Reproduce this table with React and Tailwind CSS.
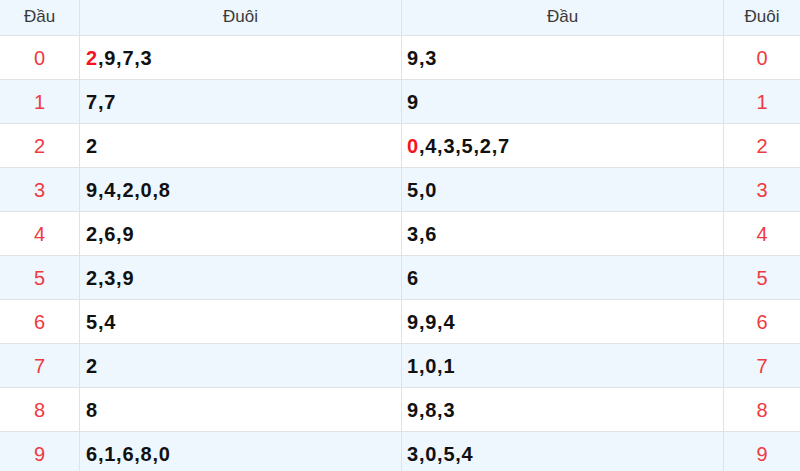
import React from "react";

const rows = [
    { dau: "0", duoi: ["2", "9", "7", "3"], hlDuoi: 0, dau2: ["9", "3"], hlDau: -1 },
    { dau: "1", duoi: ["7", "7"], hlDuoi: -1, dau2: ["9"], hlDau: -1 },
    { dau: "2", duoi: ["2"], hlDuoi: -1, dau2: ["0", "4", "3", "5", "2", "7"], hlDau: 0 },
    { dau: "3", duoi: ["9", "4", "2", "0", "8"], hlDuoi: -1, dau2: ["5", "0"], hlDau: -1 },
    { dau: "4", duoi: ["2", "6", "9"], hlDuoi: -1, dau2: ["3", "6"], hlDau: -1 },
    { dau: "5", duoi: ["2", "3", "9"], hlDuoi: -1, dau2: ["6"], hlDau: -1 },
    { dau: "6", duoi: ["5", "4"], hlDuoi: -1, dau2: ["9", "9", "4"], hlDau: -1 },
    { dau: "7", duoi: ["2"], hlDuoi: -1, dau2: ["1", "0", "1"], hlDau: -1 },
    { dau: "8", duoi: ["8"], hlDuoi: -1, dau2: ["9", "8", "3"], hlDau: -1 },
    { dau: "9", duoi: ["6", "1", "6", "8", "0"], hlDuoi: -1, dau2: ["3", "0", "5", "4"], hlDau: -1 },
];

function Nums({ list, hl }) {
    return (
        <span>
            {list.map((n, i) => (
                <React.Fragment key={i}>
                    {i > 0 && ","}
                    <span className={i === hl ? "text-[#f5141e]" : ""}>{n}</span>
                </React.Fragment>
            ))}
        </span>
    );
}

export default function App() {
    const cell = "border-r border-b border-[#dfe3e8] flex items-center";
    const head = `${cell} h-[36px] justify-center bg-[#eef6fe] text-[17px] text-[#3a3a3a] pb-[2px]`;
    return (
        <div className="w-[800px] h-[471px] overflow-hidden bg-white font-['Liberation_Sans',Arial,sans-serif]">
            <div className="grid grid-cols-[80px_322px_322px_76px]">
                <div className={head}>Đầu</div>
                <div className={head}>Đuôi</div>
                <div className={head}>Đầu</div>
                <div className={`${head} border-r-0`}>Đuôi</div>

                {rows.map((r, i) => {
                    const bg = i % 2 === 1 ? "bg-[#eef6fe]" : "bg-white";
                    return (
                        <React.Fragment key={i}>
                            <div className={`${cell} ${bg} h-[44px] justify-center text-[20px] text-[#ee3a40]`}>{r.dau}</div>
                            <div className={`${cell} ${bg} h-[44px] pl-[6px] text-[20px] font-bold tracking-[0.75px] text-[#111]`}>
                                <Nums list={r.duoi} hl={r.hlDuoi} />
                            </div>
                            <div className={`${cell} ${bg} h-[44px] pl-[5px] text-[20px] font-bold tracking-[0.75px] text-[#111]`}>
                                <Nums list={r.dau2} hl={r.hlDau} />
                            </div>
                            <div className={`${cell} ${bg} h-[44px] justify-center text-[20px] text-[#ee3a40] border-r-0`}>{r.dau}</div>
                        </React.Fragment>
                    );
                })}
            </div>
        </div>
    );
}
